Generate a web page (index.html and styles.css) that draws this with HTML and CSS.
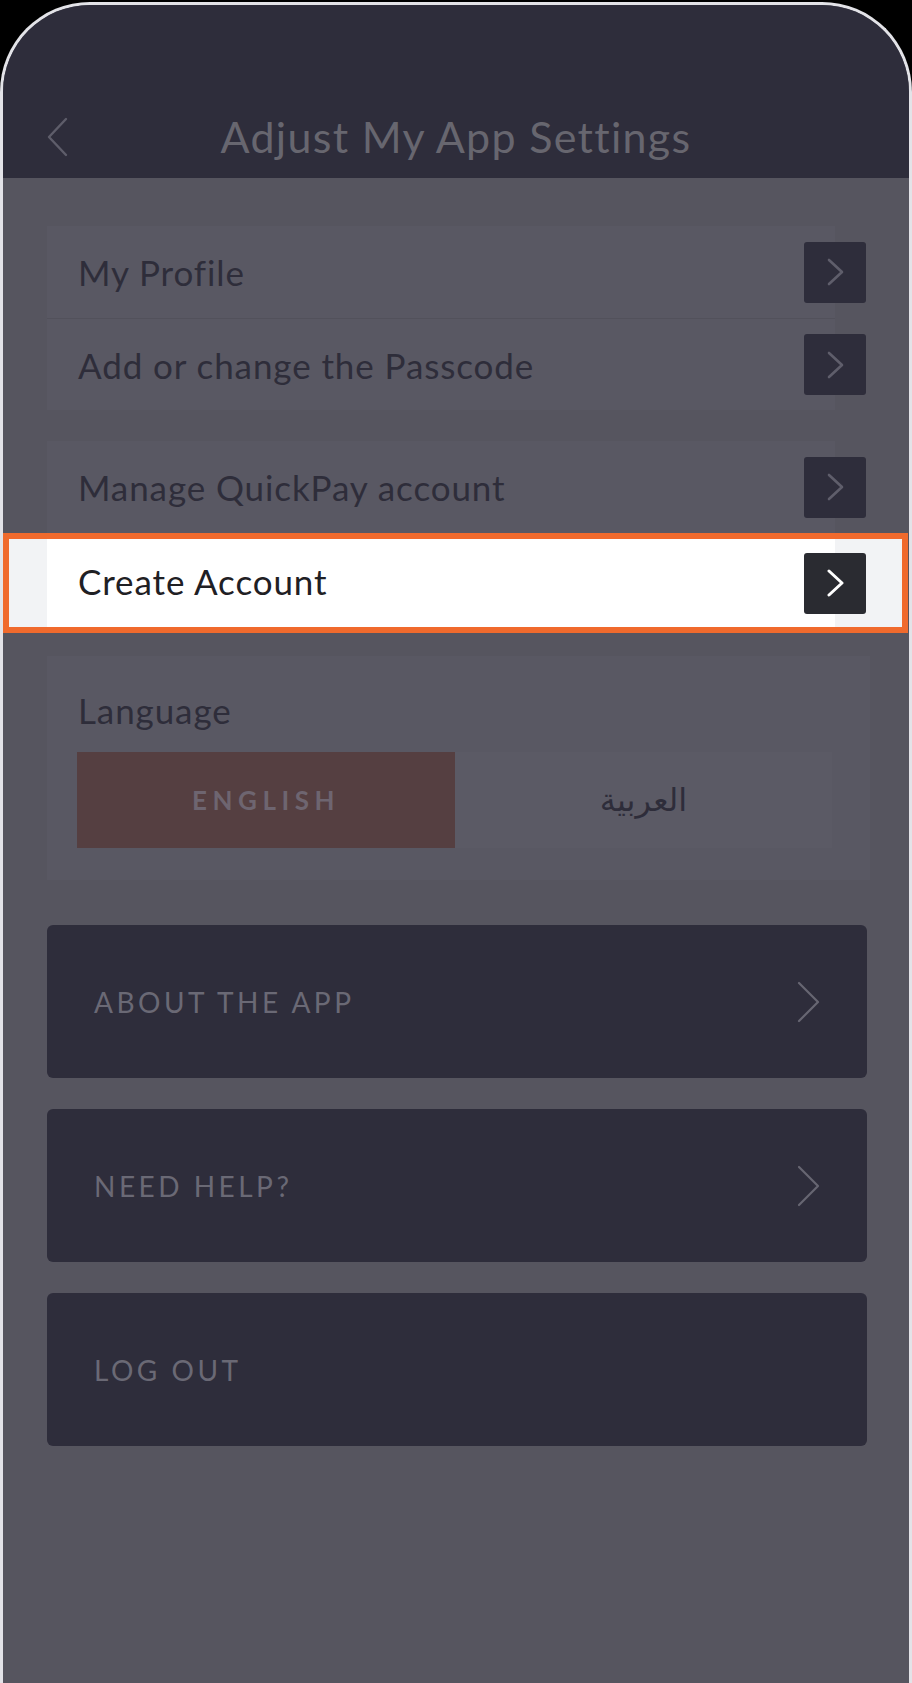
FILE: index.html
```html
<!DOCTYPE html>
<html lang="en">
<head>
<meta charset="utf-8">
<title>Adjust My App Settings</title>
<link rel="stylesheet" href="styles.css">
</head>
<body>
<div class="device">
  <header class="topbar">
    <span class="back">
      <svg width="22" height="40" viewBox="0 0 22 40"><path d="M20 2 L3 20 L20 38" fill="none" stroke="#5e5d6a" stroke-width="2.4" stroke-linecap="round" stroke-linejoin="round"/></svg>
    </span>
    <h1 class="title">Adjust My App Settings</h1>
    <span></span>
  </header>
  <main class="content">
    <section class="group">
      <div class="row">
        <span class="row-label">My Profile</span>
        <span class="go"><svg width="17" height="28" viewBox="0 0 17 28"><path d="M2 2 L15 14 L2 26" fill="none" stroke="#5f5e6b" stroke-width="2.6" stroke-linecap="round" stroke-linejoin="round"/></svg></span>
      </div>
      <div class="row row-sep">
        <span class="row-label">Add or change the Passcode</span>
        <span class="go"><svg width="17" height="28" viewBox="0 0 17 28"><path d="M2 2 L15 14 L2 26" fill="none" stroke="#5f5e6b" stroke-width="2.6" stroke-linecap="round" stroke-linejoin="round"/></svg></span>
      </div>
    </section>
    <section class="group group-two">
      <div class="row">
        <span class="row-label">Manage QuickPay account</span>
        <span class="go"><svg width="17" height="28" viewBox="0 0 17 28"><path d="M2 2 L15 14 L2 26" fill="none" stroke="#5f5e6b" stroke-width="2.6" stroke-linecap="round" stroke-linejoin="round"/></svg></span>
      </div>
      <div class="spot">
        <div class="row row-active">
          <span class="row-label">Create Account</span>
          <span class="go go-active"><svg width="17" height="28" viewBox="0 0 17 28"><path d="M2 2 L15 14 L2 26" fill="none" stroke="#ffffff" stroke-width="3" stroke-linecap="round" stroke-linejoin="round"/></svg></span>
        </div>
      </div>
    </section>
    <section class="lang-card">
      <div class="lang-label">Language</div>
      <div class="segments">
        <span class="seg seg-on">ENGLISH</span>
        <span class="seg seg-ar" lang="ar" dir="rtl">العربية</span>
      </div>
    </section>
    <a class="big-btn">
      <span class="big-label">ABOUT THE APP</span>
      <svg width="24" height="42" viewBox="0 0 24 42"><path d="M2 2 L21 21 L2 40" fill="none" stroke="#676672" stroke-width="2.2" stroke-linecap="round" stroke-linejoin="round"/></svg>
    </a>
    <a class="big-btn">
      <span class="big-label">NEED HELP?</span>
      <svg width="24" height="42" viewBox="0 0 24 42"><path d="M2 2 L21 21 L2 40" fill="none" stroke="#676672" stroke-width="2.2" stroke-linecap="round" stroke-linejoin="round"/></svg>
    </a>
    <a class="big-btn">
      <span class="big-label">LOG OUT</span>
    </a>
  </main>
</div>
</body>
</html>
```
FILE: styles.css
```css
html, body {
  margin: 0;
  padding: 0;
  background: #000;
}
body {
  font-family: Lato, "Liberation Sans", sans-serif;
  padding-top: 2px;
}
.device {
  box-sizing: border-box;
  width: 912px;
  height: 1681px;
  border: 3px solid #e3e3e8;
  border-bottom: none;
  border-radius: 90px 90px 0 0;
  overflow: hidden;
  background: #56555f;
}
.topbar {
  box-sizing: border-box;
  height: 173px;
  background: #2e2d3b;
  display: grid;
  grid-template-columns: 1fr auto 1fr;
  align-items: center;
  padding-top: 102px;
  padding-bottom: 11px;
}
.back {
  padding-left: 43px;
  display: flex;
  align-items: center;
  height: 40px;
}
.title {
  margin: 0;
  font-weight: 400;
  font-size: 43px;
  line-height: 60px;
  color: #67666f;
  letter-spacing: 1.3px;
}
.content {
  padding: 48px 0 0 44px;
}
.group {
  width: 788px;
  background: #595863;
}
.group-two {
  margin-top: 31px;
  background: transparent;
}
.group-two > .row:first-child {
  background: #595863;
}
.row {
  box-sizing: border-box;
  height: 92px;
  display: flex;
  align-items: center;
  justify-content: space-between;
  padding-left: 31px;
}
.row-sep {
  border-top: 1px solid #52515b;
}
.row-label {
  font-size: 35px;
  letter-spacing: 0.9px;
  color: #2e2d3a;
}
.go {
  width: 62px;
  height: 61px;
  margin-right: -31px;
  border-radius: 3px;
  background: #2e2d3b;
  display: flex;
  align-items: center;
  justify-content: center;
}
.spot {
  margin: 0 -73px 0 -44px;
  border: 6px solid #f06a2d;
  background: #f2f3f5;
  padding: 0 67px 0 38px;
}
.row-active {
  height: 88px;
  background: #ffffff;
}
.row-active .row-label {
  color: #1f2024;
  padding-bottom: 4px;
}
.go-active {
  background: #2a2b31;
}
.lang-card {
  box-sizing: border-box;
  width: 823px;
  margin-top: 23px;
  background: #595863;
  padding: 34px 38px 32px 30px;
}
.lang-label {
  font-size: 35px;
  letter-spacing: 0.9px;
  color: #2e2d3a;
  line-height: 40px;
  margin-left: 1px;
}
.segments {
  margin-top: 22px;
  display: grid;
  grid-template-columns: 378px 377px;
  height: 96px;
  background: #5b5a65;
}
.seg {
  display: flex;
  align-items: center;
  justify-content: center;
}
.seg-on {
  background: #553f41;
  color: #6e6570;
  font-size: 26px;
  letter-spacing: 5.5px;
  font-weight: 700;
}
.seg-ar {
  font-family: "DejaVu Sans", sans-serif;
  font-size: 32px;
  color: #2e2d3a;
}
.big-btn {
  box-sizing: border-box;
  width: 820px;
  height: 153px;
  margin-top: 31px;
  border-radius: 6px;
  background: #2e2d3b;
  display: flex;
  align-items: center;
  justify-content: space-between;
  padding: 0 46px 0 47px;
}
.lang-card + .big-btn {
  margin-top: 45px;
}
.big-label {
  font-size: 28px;
  letter-spacing: 3.5px;
  color: #6a6975;
}
```
